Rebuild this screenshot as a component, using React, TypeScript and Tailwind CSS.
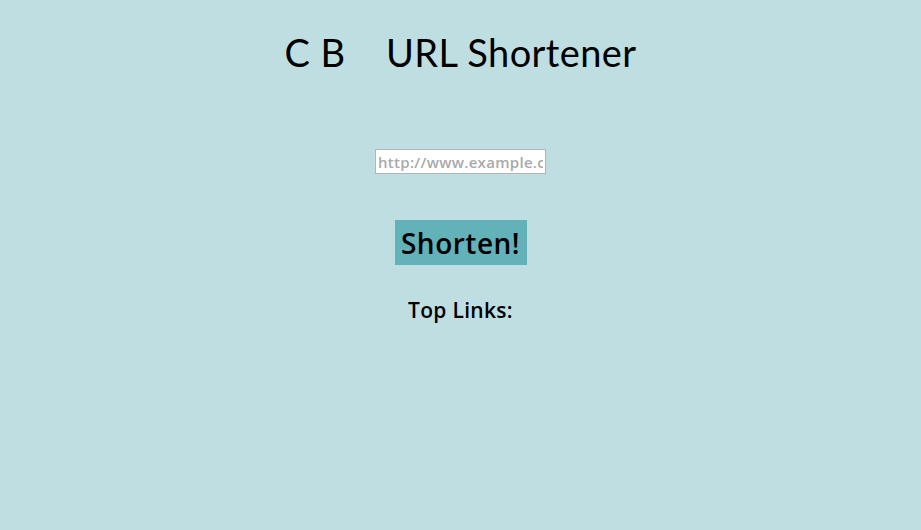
export default function App() {
  return (
    <div className="min-h-[530px] w-full bg-[#bfdee1] flex flex-col items-center">
      <h1 className="mt-[29px] text-[38px] leading-[46px] font-normal text-black whitespace-pre font-['Lato',sans-serif] tracking-[0.4px]">
        {"C B    URL Shortener"}
      </h1>
      <input
        className="mt-[74px] w-[171px] h-[25px] bg-white border border-[#b5b5b5] px-[2px] text-[15px] font-semibold text-black placeholder:text-[#a9a9a9] outline-none font-['Open_Sans',sans-serif] tracking-[0.3px]"
        placeholder="http://www.example.com"
      />
      <button className="mt-[46px] w-[132px] h-[45px] bg-[#63b1b9] text-[28px] font-semibold text-black font-['Open_Sans',sans-serif] leading-none tracking-[0.5px]">
        Shorten!
      </button>
      <h3 className="mt-[30px] text-[21px] font-semibold text-black font-['Open_Sans',sans-serif] tracking-[0.3px]">
        Top Links:
      </h3>
    </div>
  );
}
